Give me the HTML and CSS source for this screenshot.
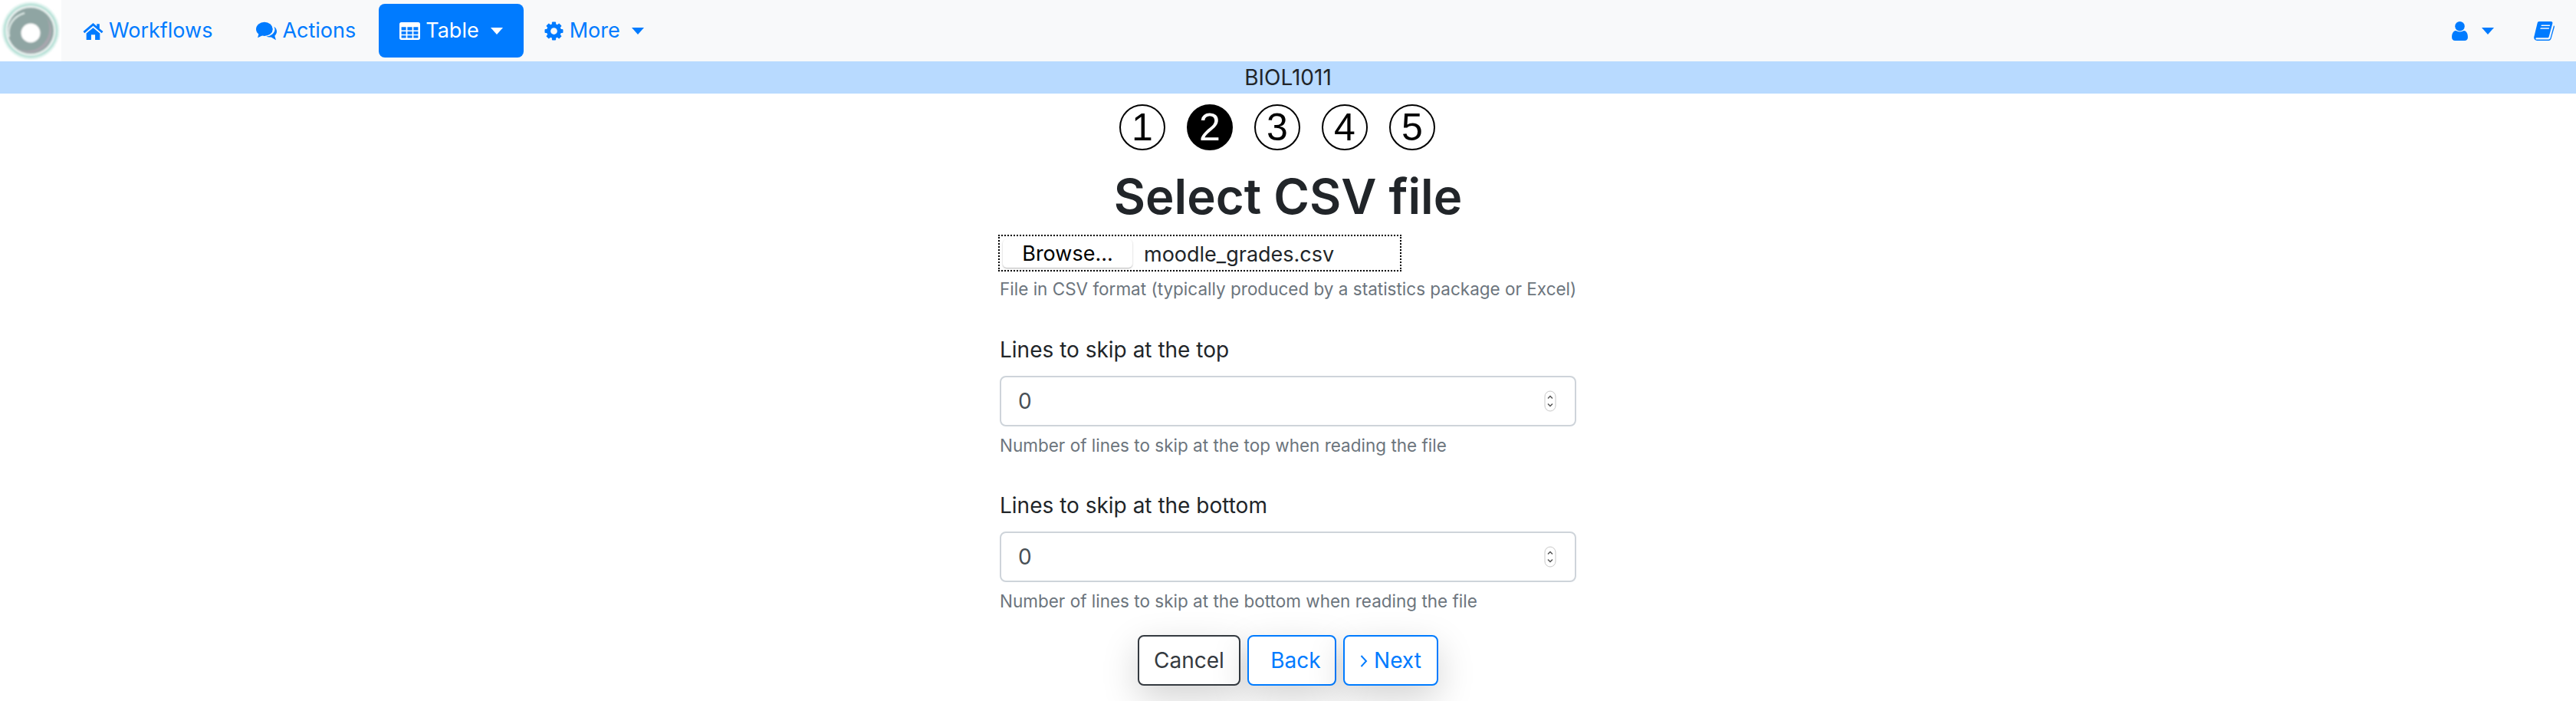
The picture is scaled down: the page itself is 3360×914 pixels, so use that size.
FILE: index.html
```html
<!DOCTYPE html>
<html>
  <head>
    <title>Select CSV file</title>
    <link rel="stylesheet" href="styles.css">
  </head>
  <body>
    <nav class="navbar">
      <a class="logo" href="#">
        <svg width="80" height="80" viewBox="0 0 80 80">
          <defs>
            <filter id="soft"><feGaussianBlur stdDeviation="0.9" /></filter>
          </defs>
          <g filter="url(#soft)">
            <circle cx="40" cy="40" r="37.500" fill="#dff3ee" />
            <circle cx="40" cy="40" r="35" fill="#a9dcd0" />
            <circle cx="40" cy="40" r="33" fill="#e8f1ef" />
            <circle cx="40" cy="40" r="30" fill="#8fa5a3" />
            <path d="M60 22a28 28 0 0 1 4 32a28 28 0 0 1-42 9a29 29 0 0 0 38-41z" fill="#a8a6ae" />
            <path d="M12 48c-3-15 6-27 20-31" fill="none" stroke="#e4efec" stroke-width="2" />
            <circle cx="40" cy="43" r="12.500" fill="#fff" />
          </g>
        </svg>
      </a>
      <ul class="nav-left">
        <li><a class="nav-link" href="#">
          <svg class="icon" viewBox="0 0 26 24"><path d="M13 2 0.5 12.6 2.2 14.6 13 5.4 23.8 14.6 25.5 12.6 21 8.8V3h-3.4v2.9z" /><path d="M4.5 15 13 7.8 21.5 15V23h-6v-6.5h-5V23h-6z" /></svg>
          Workflows</a></li>
        <li><a class="nav-link" href="#">
          <svg class="icon" viewBox="0 0 26 24"><ellipse cx="10.5" cy="9.5" rx="10.5" ry="8.8" /><path d="M3.5 15 2 20.5 9 17z" /><path d="M22.6 6.5C24.8 8 26 10.2 26 12.6c0 2.2-1 4-2.6 5.4l1.6 5.2-6-3.6c-2.2.4-4.4.1-6.2-.9 5.600-.2 10.800-4 10.800-9.200z" /></svg>
          Actions</a></li>
        <li><a class="nav-link active caret" href="#">
          <svg class="icon" viewBox="0 0 26 24"><path fill-rule="evenodd" d="M2.500 1h21A2.500 2.500 0 0 1 26 3.500v17a2.500 2.500 0 0 1-2.500 2.500h-21A2.500 2.500 0 0 1 0 20.500v-17A2.500 2.500 0 0 1 2.500 1zM2.500 7v4h5.800V7zM10 7v4h6V7zM17.700 7v4h5.800V7zM2.500 12.500v3.600h5.800v-3.600zM10 12.500v3.600h6v-3.600zM17.700 12.500v3.600h5.800v-3.600zM2.500 17.600v3h5.800v-3zM10 17.600v3h6v-3zM17.700 17.600v3h5.800v-3z" /></svg>
          Table</a></li>
        <li><a class="nav-link caret" href="#">
          <svg class="icon" viewBox="0 0 24 24"><circle cx="12" cy="12" r="6.700" fill="none" stroke="currentColor" stroke-width="5" /><g><rect x="9.500" y="0.500" width="5" height="23" rx="1" /><rect x="9.500" y="0.500" width="5" height="23" rx="1" transform="rotate(45 12 12)" /><rect x="9.500" y="0.500" width="5" height="23" rx="1" transform="rotate(90 12 12)" /><rect x="9.500" y="0.500" width="5" height="23" rx="1" transform="rotate(135 12 12)" /></g><circle cx="12" cy="12" r="4.200" fill="#f8f9fa" /></svg>
          More</a></li>
      </ul>
      <ul class="nav-right">
        <li><a class="nav-link caret" href="#">
          <svg class="icon user" viewBox="0 0 20 24"><circle cx="10" cy="6" r="6" /><path d="M0 20c0-5 1.500-8 5-8.500 3 1.800 7 1.800 10 0 3.500.5 5 3.500 5 8.500 0 2.500-1.500 4-4 4H4c-2.500 0-4-1.500-4-4z" /></svg>
        </a></li>
        <li><a class="nav-link" href="#">
          <svg class="icon book" viewBox="0 0 26 24"><path d="M6.500 0H21.500C23 0 23.800 1 23.400 2.500L19 19C18.700 20 18 20.500 17 20.500H3.500C2 20.500 1.800 22.500 3.500 22.500H18.500C19.800 22.500 20.400 21.900 20.800 20.500L25 5C25.800 5.300 26.200 6 25.900 7L21.800 21.500C21.300 23 20.200 24 18.700 24H4C1.200 24 -.5 21.500.4 18.800L4.500 2C4.800.8 5.500 0 6.500 0zM9.500 4.200 9.100 5.700H20L20.400 4.200zM8.400 7.800 8 9.300H19L19.400 7.800z" fill-rule="evenodd" /></svg>
        </a></li>
      </ul>
    </nav>
    <div class="course-bar">BIOL1011</div>
    <div class="steps">
      <span class="step">1</span>
      <span class="step current">2</span>
      <span class="step">3</span>
      <span class="step">4</span>
      <span class="step">5</span>
    </div>
    <h1 class="title">Select CSV file</h1>
    <form class="upload-form">
      <div class="file-box">
        <span class="browse">Browse...</span>
        <span class="file-name">moodle_grades.csv</span>
      </div>
      <small class="help help-file">File in CSV format (typically produced by a statistics package or Excel)</small>

      <div class="form-group">
        <label for="skipTop">Lines to skip at the top</label>
        <div class="number-input">
          <input type="text" id="skipTop" value="0" />
          <svg class="spinner" width="16" height="28" viewBox="0 0 16 28"><rect x="1" y="1" width="14" height="26" rx="7" /><path d="M5 10.500 8 7.500 11 10.500M5 17.500 8 20.500 11 17.500" /></svg>
        </div>
        <small class="help">Number of lines to skip at the top when reading the file</small>
      </div>

      <div class="form-group">
        <label for="skipBottom">Lines to skip at the bottom</label>
        <div class="number-input">
          <input type="text" id="skipBottom" value="0" />
          <svg class="spinner" width="16" height="28" viewBox="0 0 16 28"><rect x="1" y="1" width="14" height="26" rx="7" /><path d="M5 10.500 8 7.500 11 10.500M5 17.500 8 20.500 11 17.500" /></svg>
        </div>
        <small class="help">Number of lines to skip at the bottom when reading the file</small>
      </div>

      <div class="buttons">
        <button type="button" class="btn btn-cancel">Cancel</button>
        <button type="button" class="btn btn-back">Back</button>
        <button type="button" class="btn btn-next">
          <svg class="chevron" width="10" height="18" viewBox="0 0 10 18"><path d="M1.500 2 8 9 1.500 16" /></svg>
          Next</button>
      </div>
    </form>
  </body>
</html>
```

FILE: styles.css
```css
body {
  margin: 0;
  min-height: 914px;
  background-color: #fff;
  color: #212529;
  font-family: Inter, "Liberation Sans", sans-serif;
  font-size: 28px;
  line-height: 1.5;
}

.navbar {
  display: flex;
  align-items: center;
  height: 80px;
  background-color: #f8f9fa;
  font-size: 27px;
}
.logo {
  display: block;
  width: 80px;
  height: 80px;
  background-color: #fff;
}
.nav-left,
.nav-right {
  display: flex;
  align-items: center;
  margin: 0;
  padding: 0;
  list-style: none;
}
.nav-left {
  flex: 1;
  margin-left: 15px;
}
.nav-left li {
  margin-right: 17px;
}
.nav-left li:first-child {
  margin-right: 31px;
}
.nav-left li:nth-child(3) {
  margin-right: 13px;
}
.nav-link {
  display: flex;
  align-items: center;
  height: 70px;
  padding: 0 13px;
  border-radius: 8px;
  color: #007bff;
  text-decoration: none;
}
.nav-link.active {
  background-color: #007bff;
  color: #fff;
  padding: 0 27px;
}
.icon {
  width: 27px;
  height: 25px;
  margin-right: 7px;
  fill: currentColor;
}
.caret::after {
  content: "";
  margin-left: 15px;
  border-top: 9px solid;
  border-left: 8.5px solid transparent;
  border-right: 8.5px solid transparent;
}
.nav-right .icon {
  margin-right: 0;
}
.nav-right .caret {
  padding: 0 12px 0 0;
}
.nav-right li:last-child .nav-link {
  padding: 0 28px 0 40px;
}

.course-bar {
  height: 42px;
  line-height: 42px;
  background-color: #b8daff;
  text-align: center;
}

.steps {
  display: flex;
  justify-content: center;
  gap: 28px;
  margin-top: 14px;
  padding-right: 28px;
}
.step {
  box-sizing: border-box;
  width: 60px;
  height: 60px;
  border: 2px solid #000;
  border-radius: 50%;
  color: #000;
  font-family: "Liberation Sans", sans-serif;
  font-size: 50px;
  line-height: 56px;
  text-align: center;
}
.step.current {
  background-color: #000;
  color: #fff;
}

.title {
  margin: 16px 0 0;
  height: 94px;
  font-size: 63.500px;
  font-weight: 600;
  line-height: 88px;
  text-align: center;
}

.upload-form {
  width: 752px;
  margin: 0 auto;
}
.file-box {
  display: flex;
  align-items: center;
  box-sizing: border-box;
  width: 526px;
  height: 48px;
  margin-left: -2px;
  padding-left: 4px;
  border: 2px dotted #000;
  color: #000;
  font-size: 27px;
}
.browse {
  box-sizing: border-box;
  width: 169px;
  height: 37px;
  line-height: 37px;
  margin-right: 15px;
  background-color: #fff;
  border-radius: 5px;
  box-shadow: 0 1px 2px rgba(0, 0, 0, 0.3);
  text-align: center;
}
.file-name {
  color: #212529;
  line-height: 37px;
  padding-top: 2px;
}

.help {
  display: block;
  margin-top: 7px;
  color: #6c757d;
  font-size: 22.500px;
  line-height: 36px;
  white-space: nowrap;
}
.help-file {
  margin-top: 5px;
}

.form-group {
  margin-top: 41px;
}
.form-group + .form-group {
  margin-top: 40px;
}
.form-group label {
  display: block;
  height: 43px;
  margin-bottom: 11px;
  line-height: 40px;
}
.number-input {
  display: flex;
  align-items: center;
  box-sizing: border-box;
  height: 66px;
  padding: 0 24px 0 22px;
  border: 2px solid #ced4da;
  border-radius: 8px;
}
.number-input input {
  flex: 1;
  min-width: 0;
  padding: 0;
  border: 0;
  outline: 0;
  background: none;
  color: #495057;
  font-family: inherit;
  font-size: 28px;
}
.spinner rect {
  fill: #fff;
  stroke: #c8c8c8;
  stroke-width: 1;
}
.spinner path {
  fill: none;
  stroke: #555;
  stroke-width: 1.5;
}

.buttons {
  display: flex;
  justify-content: center;
  gap: 9px;
  margin-top: 26px;
}
.btn {
  box-sizing: border-box;
  height: 66px;
  padding: 0;
  border: 2px solid;
  border-radius: 8px;
  background-color: #fff;
  box-shadow: 0 16px 48px rgba(0, 0, 0, 0.175);
  font-family: inherit;
  font-size: 28px;
}
.btn-cancel {
  width: 134px;
  border-color: #343a40;
  color: #343a40;
}
.btn-back {
  width: 116px;
  padding-left: 10px;
  border-color: #007bff;
  color: #007bff;
}
.btn-next {
  width: 124px;
  border-color: #007bff;
  color: #007bff;
}
.chevron {
  fill: none;
  stroke: currentColor;
  stroke-width: 2;
}
```
